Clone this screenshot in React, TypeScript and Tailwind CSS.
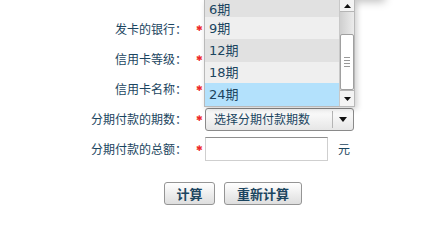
import React from "react";

const rows = [
  { label: "发卡的银行：" },
  { label: "信用卡等级：" },
  { label: "信用卡名称：" },
  { label: "分期付款的期数：", field: "select" },
  { label: "分期付款的总额：", field: "input" },
];

const options = [
  { text: "6期", cls: "bg-[#e1e1e1] h-[17px] items-end pb-[1px]" },
  { text: "9期", cls: "bg-[#efefef] h-[22px] items-center" },
  { text: "12期", cls: "bg-[#e1e1e1] h-[23px] items-center" },
  { text: "18期", cls: "bg-[#efefef] h-[21px] items-center" },
  { text: "24期", cls: "bg-[#b3e1fc] h-[23px] items-center" },
];

function Field({ type }: { type?: string }) {
  if (type === "select") {
    return (
      <div className="flex h-[23px] w-[149px] items-center rounded-[3px] border border-[#8a8a8a] bg-gradient-to-b from-white to-[#e6e6e6] pl-[8px] text-[12px]">
        <span className="flex-1">选择分期付款期数</span>
        <span className="h-[17px] w-px bg-[#b5b5b5]" />
        <span className="flex w-[20px] justify-center">
          <svg width="8" height="5" viewBox="0 0 8 5">
            <path d="M0 0h8L4 5z" fill="#111" />
          </svg>
        </span>
      </div>
    );
  }
  if (type === "input") {
    return (
      <div className="flex items-center">
        <div className="h-[24px] w-[123px] border border-[#cfcfcf] border-t-[#8f8f8f] bg-white" />
        <span className="ml-[10px] text-[12px]">元</span>
      </div>
    );
  }
  return null;
}

export default function App() {
  return (
    <div
      className="relative h-[225px] w-[431px] overflow-hidden bg-white text-[#1b4560]"
      style={{ fontFamily: '"Noto Sans CJK SC", "Noto Sans", sans-serif' }}
    >
      <div className="pt-[14px]">
        {rows.map((r) => (
          <div key={r.label} className="flex h-[30px] items-center">
            <div className="w-[187px] text-right text-[12px] leading-none">{r.label}</div>
            <div
              className="flex w-[18px] items-center pl-[9px] text-[8px] leading-none text-[#ee2a2a]"
              style={{ fontFamily: '"DejaVu Sans", sans-serif' }}
            >
              ✱
            </div>
            <Field type={r.field} />
          </div>
        ))}
        <div className="mt-[18px] flex gap-[9px] pl-[164px]">
          <button className="h-[23px] w-[51px] rounded-[3px] border border-[#959595] bg-gradient-to-b from-white to-[#dedede] text-[13px] font-bold">
            计算
          </button>
          <button className="h-[23px] w-[78px] rounded-[3px] border border-[#959595] bg-gradient-to-b from-white to-[#dedede] text-[13px] font-bold">
            重新计算
          </button>
        </div>
      </div>

      <div className="absolute left-[255px] top-[-20px] h-[20px] w-[130px] shadow-[0_2px_8px_rgba(0,0,0,0.25)]" />

      <div className="absolute left-[204px] top-0 flex h-[107px] w-[151px] border border-t-0 border-[#b9b9b9] bg-white shadow-[2px_2px_6px_rgba(0,0,0,0.2)]">
        <div className="flex flex-1 flex-col">
          {options.map((o) => (
            <div
              key={o.text}
              className={`flex pl-[4px] text-[13px] leading-none ${o.cls}`}
              style={{ fontFamily: '"DejaVu Sans", "Noto Sans CJK SC", sans-serif' }}
            >
              {o.text}
            </div>
          ))}
        </div>
        <div className="flex w-[15px] flex-col border-l border-[#c8c8c8] bg-gradient-to-r from-[#cfcfcf] to-[#ececec]">
          <div className="flex h-[12px] items-center justify-center border-b border-[#b5b5b5] bg-[#f4f4f4]">
            <svg width="7" height="4" viewBox="0 0 7 4">
              <path d="M0 4h7L3.5 0z" fill="#111" />
            </svg>
          </div>
          <div className="h-[22px]" />
          <div className="flex h-[56px] flex-col items-center justify-center gap-[2px] rounded-[2px] border border-[#a0a0a0] bg-white">
            <span className="h-px w-[6px] bg-[#999]" />
            <span className="h-px w-[6px] bg-[#999]" />
            <span className="h-px w-[6px] bg-[#999]" />
            <span className="h-px w-[6px] bg-[#999]" />
          </div>
          <div className="flex flex-1 items-center justify-center border-t border-[#b5b5b5] bg-[#f4f4f4]">
            <svg width="7" height="4" viewBox="0 0 7 4">
              <path d="M0 0h7L3.5 4z" fill="#111" />
            </svg>
          </div>
        </div>
      </div>
    </div>
  );
}
